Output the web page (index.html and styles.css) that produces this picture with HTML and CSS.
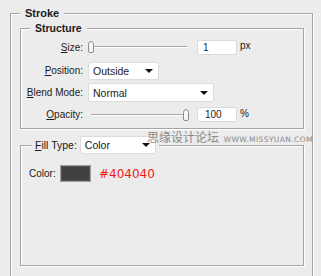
FILE: index.html
```html
<!doctype html>
<html lang="en">
<head>
    <meta charset="utf-8"/>
    <title>Stroke</title>
    <link rel="stylesheet" href="styles.css">
</head>
<body>
    <div class="panel">
        <fieldset class="group outer">
            <legend class="title">Stroke</legend>

            <fieldset class="group structure">
                <legend class="title">Structure</legend>

                <div class="row size">
                    <span class="label"><u>S</u>ize:</span>
                    <div class="slider">
                        <svg class="thumb start" width="8" height="12" viewBox="0 0 8 12"><path d="M1.5 3.5 Q1.5 .5 4 .5 Q6.5 .5 6.5 3.5 V10 Q6.5 11.5 5 11.5 H3 Q1.5 11.5 1.5 10 Z" fill="#f6f6f6" stroke="#8c8c8c"/></svg>
                    </div>
                    <div class="field">1</div>
                    <span class="unit">px</span>
                </div>

                <div class="row position">
                    <span class="label"><u>P</u>osition:</span>
                    <div class="select short">Outside<i class="arrow"></i></div>
                </div>

                <div class="row blend">
                    <span class="label"><u>B</u>lend Mode:</span>
                    <div class="select long">Normal<i class="arrow"></i></div>
                </div>

                <div class="row opacity">
                    <span class="label"><u>O</u>pacity:</span>
                    <div class="slider">
                        <svg class="thumb end" width="8" height="12" viewBox="0 0 8 12"><path d="M1.5 3.5 Q1.5 .5 4 .5 Q6.5 .5 6.5 3.5 V10 Q6.5 11.5 5 11.5 H3 Q1.5 11.5 1.5 10 Z" fill="#f6f6f6" stroke="#8c8c8c"/></svg>
                    </div>
                    <div class="field">100</div>
                    <span class="unit">%</span>
                </div>
            </fieldset>

            <fieldset class="group fill">
                <legend class="title plain">
                    <span><u>F</u>ill Type:</span>
                    <div class="select fill-type">Color<i class="arrow"></i></div>
                </legend>

                <div class="row color">
                    <span class="color-label">Color:</span>
                    <div class="swatch"></div>
                    <span class="hex">#404040</span>
                </div>
            </fieldset>
        </fieldset>

        <div class="watermark">思缘设计论坛 <small>WWW.MISSYUAN.COM</small></div>
    </div>
</body>
</html>
```

FILE: styles.css
```css
html, body {
    margin: 0;
    padding: 0;
    background: #ececec;
    overflow: hidden;
}
body {
    width: 321px;
    height: 276px;
    font-family: "Liberation Sans", Arial, sans-serif;
    font-size: 10px;
    color: #1a1a1a;
}
.panel {
    position: relative;
    height: 276px;
    overflow: hidden;
}

.group {
    margin: 0;
    border: 1px solid #a4a4a4;
    box-shadow: 1px 1px 0 #fff, inset 1px 1px 0 #fff;
    min-width: 0;
}
.title {
    background: #ececec;
    font-weight: bold;
    font-size: 11px;
    line-height: 13px;
    padding: 0 5px;
}

.outer {
    margin: 7px 0 0 10px;
    width: 303px;
    padding: 2px 8px 40px 9px;
    box-sizing: border-box;
}

.structure {
    padding: 0 0 2px 0;
}
.structure > .title {
    margin-left: 9px;
    font-size: 10.5px;
}

.row {
    display: flex;
    align-items: center;
}
.row.size { height: 24px; }
.row.position { height: 23px; }
.row.blend { height: 21px; }
.row.opacity { height: 23px; }

.label {
    width: 62px;
    text-align: right;
    margin-right: 5px;
    flex: none;
}

.slider {
    position: relative;
    width: 99px;
    height: 0;
    border-top: 1px solid #a8a8a8;
    border-bottom: 1px solid #fff;
    margin-right: 10px;
}
.opacity .slider {
    margin-left: 3px;
    width: 96px;
}
.thumb {
    position: absolute;
    top: -6px;
}
.thumb.start { left: -1px; }
.thumb.end { right: -3px; }

.field {
    width: 33px;
    height: 13px;
    line-height: 13px;
    background: #fff;
    border: 1px solid #dadada;
    border-radius: 2px;
    padding-left: 5px;
    box-sizing: content-box;
    font-size: 10px;
    color: #222;
}
.opacity .field {
    width: 31px;
    padding-left: 7px;
}
.unit {
    margin-left: 3px;
    margin-top: -3px;
}

.select {
    position: relative;
    background: #fff;
    border: 1px solid #dcdcdc;
    border-radius: 2px;
    height: 17px;
    line-height: 17px;
    padding-left: 4px;
    box-sizing: border-box;
    font-size: 10.5px;
}
.select.short { width: 71px; height: 18px; line-height: 17px; }
.select.long { width: 126px; height: 19px; line-height: 18px; }
.arrow {
    position: absolute;
    right: 5px;
    top: 50%;
    margin-top: -2px;
    border-left: 4px solid transparent;
    border-right: 4px solid transparent;
    border-top: 4px solid #111;
}

.fill {
    margin-top: 7px;
    padding: 10px 0 82px 8px;
}
.fill > .title {
    margin-left: 3px;
    padding: 0 3px;
    font-weight: normal;
    font-size: 10.5px;
    line-height: 18px;
    display: flex;
    align-items: center;
}
.select.fill-type {
    width: 76px;
    height: 18px;
    margin-left: 3px;
}

.row.color {
    height: 19px;
}
.color-label {
    width: 31px;
}
.swatch {
    width: 29px;
    height: 15px;
    background: #404040;
    border: 1px solid #9c9c9c;
    box-shadow: inset 0 0 0 1px #555;
}
.hex {
    margin-left: 8px;
    font-family: "DejaVu Sans", sans-serif;
    font-size: 12px;
    color: #f01818;
}

.watermark {
    position: absolute;
    left: 147px;
    top: 129px;
    font-family: "Noto Sans CJK SC", sans-serif;
    font-size: 12px;
    line-height: 16px;
    color: #8a8a8a;
    white-space: nowrap;
}
.watermark small {
    font-family: "DejaVu Sans", sans-serif;
    font-size: 7.5px;
    letter-spacing: 0.4px;
    margin-left: 2px;
}
```
